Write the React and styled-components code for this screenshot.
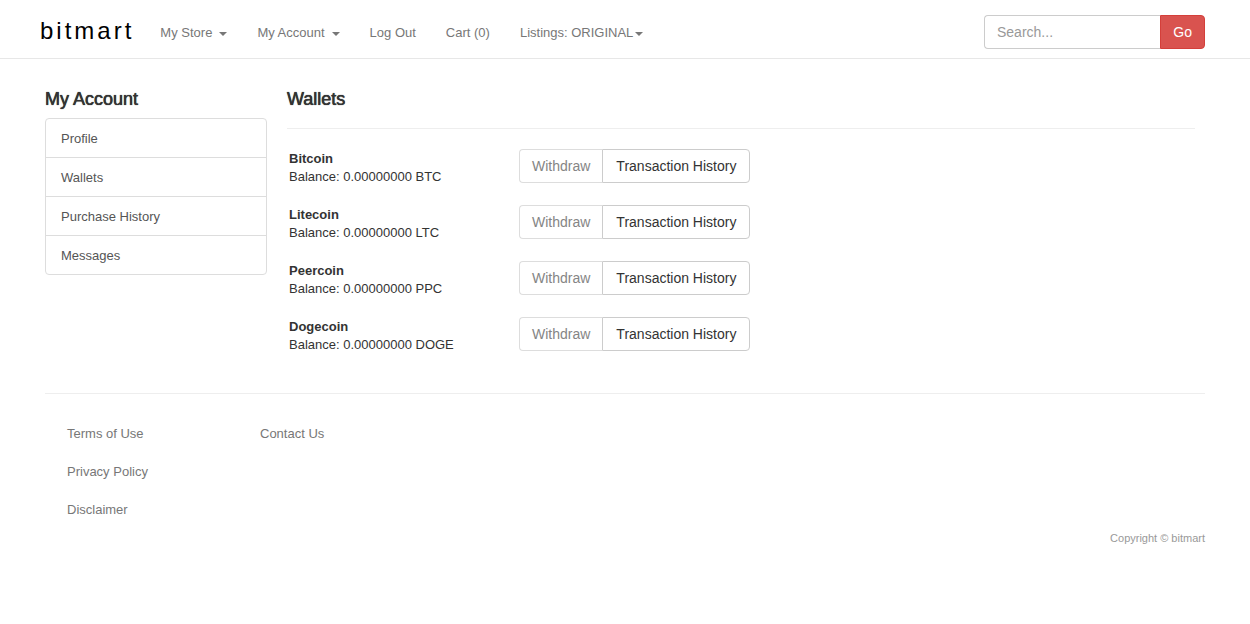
import React from "react";
import styled, { createGlobalStyle } from "styled-components";

const GlobalStyle = createGlobalStyle`
  *, *::before, *::after { box-sizing: border-box; }
  body {
    margin: 0;
    background: #fff;
    color: #333;
    font: 13px/18px "Liberation Sans", Arial, sans-serif;
  }
  a { color: inherit; text-decoration: none; }
  ul { list-style: none; margin: 0; padding: 0; }
`;

const Header = styled.header`
  display: flex;
  align-items: center;
  min-height: 59px;
  padding: 0 45px 0 40px;
  border-bottom: 1px solid #e7e7e7;
  @media (max-width: 900px) { flex-wrap: wrap; padding-bottom: 12px; }
`;

const Brand = styled.a`
  color: #000;
  font-size: 24px;
  line-height: 28px;
  letter-spacing: 3px;
  padding: 4px 0 0;
  margin-right: 11px;
`;

const NavList = styled.ul`
  display: flex;
  flex-wrap: wrap;
  flex: 1;
`;

const NavLink = styled.a`
  display: flex;
  align-items: center;
  gap: ${(p) => (p.$tight ? "2px" : "7px")};
  padding: 21px 15px 13px;
  line-height: 24px;
  color: #777;
`;

const Caret = styled.span`
  border: 4px solid transparent;
  border-top-color: currentColor;
  border-bottom: 0;
  margin-top: 2px;
`;

const SearchForm = styled.form`
  display: flex;
  width: 221px;
  padding-top: 5px;
`;

const SearchInput = styled.input`
  flex: 1;
  min-width: 0;
  height: 34px;
  padding: 6px 12px;
  border: 1px solid #ccc;
  border-right: 0;
  border-radius: 4px 0 0 4px;
  font: 14px/20px "Liberation Sans", Arial, sans-serif;
  &::placeholder { color: #999; opacity: 1; }
`;

const Button = styled.button`
  height: 34px;
  padding: 6px 12px;
  border: 1px solid #ccc;
  background: #fff;
  color: #333;
  font: 14px/20px "Liberation Sans", Arial, sans-serif;
  white-space: nowrap;
  &:disabled { color: #858585; border-color: #ddd; }
`;

const GoButton = styled(Button)`
  border-color: #d43f3a;
  border-radius: 0 4px 4px 0;
  background: #d9534f;
  color: #fff;
`;

const Page = styled.div`
  padding: 0 45px;
`;

const Columns = styled.div`
  display: flex;
  gap: 20px;
  padding-top: 30px;
  @media (max-width: 700px) { flex-direction: column; }
`;

const Sidebar = styled.nav`
  flex: 0 0 222px;
`;

const Main = styled.main`
  flex: 1;
  padding-right: 10px;
`;

const Title = styled.h1`
  margin: 0;
  font-size: 18px;
  font-weight: 500;
  line-height: 20px;
  text-shadow: 0 0 0 currentColor, 0 0 1px currentColor;
`;

const Menu = styled.ul`
  margin-top: 9px;
  border: 1px solid #ddd;
  border-radius: 4px;
`;

const MenuItem = styled.li`
  & + & { border-top: 1px solid #ddd; }
`;

const MenuLink = styled.a`
  display: block;
  padding: 11px 15px 9px;
  color: #555;
`;

const Divider = styled.hr`
  margin: 0;
  border: 0;
  border-top: 1px solid #eee;
`;

const WalletDivider = styled(Divider)`
  margin-top: 19px;
`;

const WalletList = styled.ul`
  display: grid;
  gap: 22px;
  padding: 20px 0 42px 2px;
`;

const Wallet = styled.li`
  display: flex;
  min-height: 34px;
  max-height: 34px;
`;

const WalletInfo = styled.div`
  flex: 0 0 230px;
  padding-top: 1px;
`;

const WalletName = styled.strong`
  display: block;
`;

const ButtonGroup = styled.div`
  display: flex;
  ${Button}:first-child { border-right: 0; border-radius: 4px 0 0 4px; }
  ${Button}:last-child { padding: 6px 13px; border-radius: 0 4px 4px 0; }
`;

const FooterColumns = styled.div`
  display: flex;
  padding: 31px 22px 0;
`;

const FooterLinks = styled.ul`
  display: flex;
  flex-direction: column;
  gap: 20px;
  flex: 0 0 193px;
  color: #777;
`;

const Copyright = styled.p`
  margin: 11px 0 0;
  text-align: right;
  font-size: 11px;
  line-height: 16px;
  color: #999;
`;

const navItems = [
  { label: "My Store", caret: true },
  { label: "My Account", caret: true },
  { label: "Log Out" },
  { label: "Cart (0)" },
  { label: "Listings: ORIGINAL", caret: true, tight: true },
];

const accountPages = ["Profile", "Wallets", "Purchase History", "Messages"];

const wallets = [
  { name: "Bitcoin", unit: "BTC" },
  { name: "Litecoin", unit: "LTC" },
  { name: "Peercoin", unit: "PPC" },
  { name: "Dogecoin", unit: "DOGE" },
];

const footerColumns = [
  ["Terms of Use", "Privacy Policy", "Disclaimer"],
  ["Contact Us"],
];

export default function App() {
  return (
    <>
      <GlobalStyle />
      <Header>
        <Brand href="#">bitmart</Brand>
        <NavList>
          {navItems.map((item) => (
            <li key={item.label}>
              <NavLink href="#" $tight={item.tight}>
                {item.label}
                {item.caret && <Caret />}
              </NavLink>
            </li>
          ))}
        </NavList>
        <SearchForm role="search" onSubmit={(e) => e.preventDefault()}>
          <SearchInput type="text" aria-label="Search" placeholder="Search..." />
          <GoButton type="submit">Go</GoButton>
        </SearchForm>
      </Header>
      <Page>
        <Columns>
          <Sidebar>
            <Title as="h2">My Account</Title>
            <Menu>
              {accountPages.map((label) => (
                <MenuItem key={label}>
                  <MenuLink href="#">{label}</MenuLink>
                </MenuItem>
              ))}
            </Menu>
          </Sidebar>
          <Main>
            <Title>Wallets</Title>
            <WalletDivider />
            <WalletList>
              {wallets.map(({ name, unit }) => (
                <Wallet key={name}>
                  <WalletInfo>
                    <WalletName>{name}</WalletName>
                    Balance: 0.00000000 {unit}
                  </WalletInfo>
                  <ButtonGroup>
                    <Button type="button" disabled>Withdraw</Button>
                    <Button type="button">Transaction History</Button>
                  </ButtonGroup>
                </Wallet>
              ))}
            </WalletList>
          </Main>
        </Columns>
        <footer>
          <Divider />
          <FooterColumns>
            {footerColumns.map((links) => (
              <FooterLinks key={links[0]}>
                {links.map((label) => (
                  <li key={label}><a href="#">{label}</a></li>
                ))}
              </FooterLinks>
            ))}
          </FooterColumns>
          <Copyright>Copyright © bitmart</Copyright>
        </footer>
      </Page>
    </>
  );
}
